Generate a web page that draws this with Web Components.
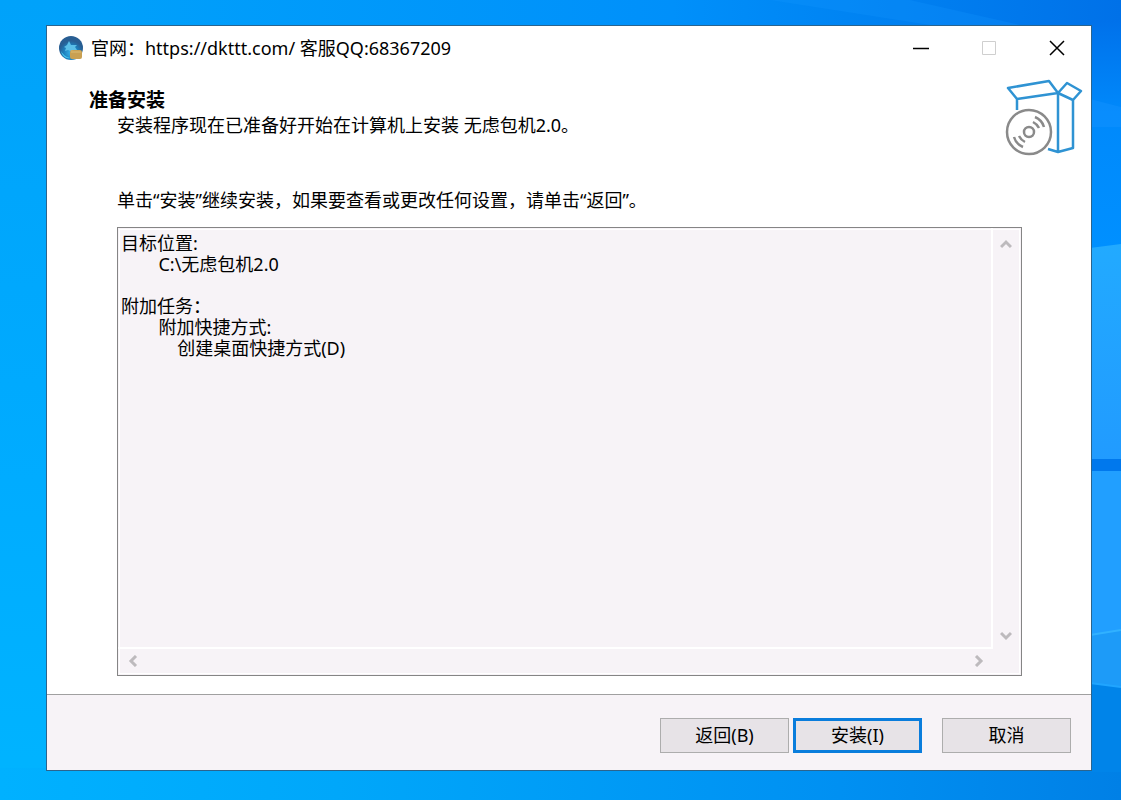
<!DOCTYPE html>
<html lang="zh-CN">
<head>
<meta charset="utf-8">
<meta name="viewport" content="width=device-width, initial-scale=1">
<title>安装向导</title>
<style>
  html, body { margin: 0; height: 100%; }
  body { font: 18px/21px "Noto Sans", "Noto Sans CJK SC", sans-serif; color: #000; }
</style>
</head>
<body>
<setup-desktop>
  <setup-window>
    <title-bar slot="title">官网：https://dkttt.com/ 客服QQ:68367209</title-bar>
    <wizard-header slot="header">
      <span slot="heading">准备安装</span>
      <span slot="detail">安装程序现在已准备好开始在计算机上安装 无虑包机2.0。</span>
    </wizard-header>
    <ready-memo>单击“安装”继续安装，如果要查看或更改任何设置，请单击“返回”。</ready-memo>
    <wizard-footer slot="footer">
      <wizard-button>返回(B)</wizard-button>
      <wizard-button primary>安装(I)</wizard-button>
      <wizard-button apart>取消</wizard-button>
    </wizard-footer>
  </setup-window>
</setup-desktop>

<script>
function define(name, markup) {
  const template = document.createElement('template');
  template.innerHTML = markup;
  customElements.define(name, class extends HTMLElement {
    constructor() {
      super();
      this.attachShadow({ mode: 'open' }).append(template.content.cloneNode(true));
    }
  });
}

define('setup-desktop', `
  <style>
    :host { display: flex; box-sizing: border-box; min-height: 100vh; padding: 25px 29px 29px 46px; position: relative; background: #008ff5; }
    .wallpaper { position: absolute; inset: 0; width: 100%; height: 100%; }
    ::slotted(*) { position: relative; flex: 1; }
  </style>
  <svg class="wallpaper" viewBox="0 0 1121 800" preserveAspectRatio="none" aria-hidden="true">
    <defs>
      <linearGradient id="top"><stop offset="0" stop-color="#00a3fb"/><stop offset=".6" stop-color="#0090fa"/><stop offset="1" stop-color="#0071e8"/></linearGradient>
      <linearGradient id="left" x2="0" y2="1"><stop offset="0" stop-color="#00a2fa"/><stop offset=".6" stop-color="#00acff"/><stop offset="1" stop-color="#00b4ff"/></linearGradient>
      <linearGradient id="bottom"><stop offset="0" stop-color="#00b1ff"/><stop offset=".3" stop-color="#00a7fa"/><stop offset=".75" stop-color="#0090f2"/><stop offset="1" stop-color="#0080e6"/></linearGradient>
      <linearGradient id="right" x2="0" y2="1"><stop offset="0" stop-color="#0071ea"/><stop offset=".4" stop-color="#0089fb"/><stop offset="1" stop-color="#0090ff"/></linearGradient>
      <linearGradient id="pane" x2="0" y2="1"><stop offset="0" stop-color="#22aaff"/><stop offset="1" stop-color="#219bff"/></linearGradient>
    </defs>
    <rect width="1121" height="30" fill="url(#top)"/>
    <path d="M770 0h140l110 25h-90z" fill="#1597ff" opacity=".25"/>
    <rect width="50" height="800" fill="url(#left)"/>
    <rect y="768" width="1121" height="32" fill="url(#bottom)"/>
    <rect x="1090" y="20" width="31" height="230" fill="url(#right)"/>
    <path d="M1090 99l31 8v20h-31z" fill="#1593ff" opacity=".45"/>
    <path d="M1090 248l31-4v216h-31z" fill="url(#pane)"/>
    <rect x="1090" y="459" width="31" height="12" fill="#0078ed"/>
    <path d="M1090 471h31v159l-31 5z" fill="#219fff"/>
    <path d="M1090 635l31-5v57l-31-4z" fill="#1d9bf8"/>
    <path d="M1090 683l31 4v85h-31z" fill="#0084e9"/>
    <path d="M1090 635l31-5" stroke="#31b1ff" stroke-width="2"/>
    <path d="M1090 683l31 4" stroke="#20a5ff" stroke-width="2"/>
  </svg>
  <slot></slot>`);

define('setup-window', `
  <style>
    :host { display: flex; flex-direction: column; border: 1px solid #2b648e; background: #fff; min-width: 0; }
    main { flex: 1; display: flex; padding: 0 69px 18px 70px; }
    ::slotted(ready-memo) { flex: 1; min-width: 0; }
  </style>
  <slot name="title"></slot>
  <slot name="header"></slot>
  <main><slot></slot></main>
  <slot name="footer"></slot>`);

define('title-bar', `
  <style>
    :host { display: flex; align-items: center; height: 44px; padding-left: 12px; }
    .app { width: 24px; height: 24px; margin-right: 8px; flex: none; }
    .caption { flex: 1; white-space: nowrap; }
    button { width: 68px; height: 44px; padding: 0; border: 0; background: none; color: #000; display: grid; place-items: center; }
    button:disabled { color: #cfcfcf; }
    button svg { width: 16px; height: 16px; fill: none; stroke: currentColor; }
  </style>
  <svg class="app" viewBox="0 0 24 24" aria-hidden="true">
    <defs><radialGradient id="globe" cy=".7"><stop offset="0" stop-color="#38b5ea"/><stop offset=".6" stop-color="#1c7fbd"/><stop offset="1" stop-color="#285e93"/></radialGradient></defs>
    <circle cx="12" cy="12" r="12" fill="url(#globe)"/>
    <path d="M5 11l3-2 2-4 2 4 6 0-2 2 2 3-5 2-4-2-3 1 1-3z" fill="#5bbfe8"/>
    <path d="M2 15c3 5 6 6 9 7-4 1-8-2-9-7z" fill="#45c5ed"/>
    <rect x="11" y="14" width="12" height="9" rx="2" fill="#c9a052"/>
    <path d="M12 17v-3l3 1h7v2z" fill="#d3ae62"/>
  </svg>
  <span class="caption"><slot></slot></span>
  <button type="button" aria-label="最小化"><svg viewBox="0 0 16 16"><path d="M0 8.500h16" stroke-width="1.500"/></svg></button>
  <button type="button" aria-label="最大化" disabled><svg viewBox="0 0 16 16"><path d="M1.500 1.500h13v13h-13z"/></svg></button>
  <button type="button" aria-label="关闭"><svg viewBox="0 0 16 16"><path d="M1 1l14 14M15 1L1 15" stroke-width="1.500"/></svg></button>`);

define('wizard-header', `
  <style>
    :host { display: flex; box-sizing: border-box; justify-content: space-between; padding: 9px 8px 0 42px; height: 100px; }
    h1 { margin: 10px 0 4px; font-size: 19px; line-height: 22px; font-weight: 700; }
    p { margin: 0 0 0 28px; }
    svg { width: 78px; height: 78px; fill: none; stroke-width: 2.500; flex: none; }
  </style>
  <div>
    <h1><slot name="heading"></slot></h1>
    <p><slot name="detail"></slot></p>
  </div>
  <svg viewBox="0 0 78 78" aria-hidden="true">
    <g stroke="#2f93d3" stroke-linejoin="round">
      <path d="M3 9L44 2L53 14L12 20ZM53 14L62 4L76 12L68 21ZM12 20V31M53 14V73L68 69V21M53 73L43 70"/>
    </g>
    <g stroke="#8a8a8a">
      <circle cx="24" cy="53" r="22"/>
      <circle cx="24" cy="53" r="5"/>
      <path d="M28 43Q32 45 34 49M30 38Q37 41 39 48M20 63Q16 61 14 57M18 68Q11 65 9 58"/>
    </g>
  </svg>`);

define('ready-memo', `
  <style>
    :host { display: flex; flex-direction: column; }
    label { display: block; margin: 20px 0 16px; }
    .box { flex: 1; display: grid; grid-template: 1fr 26px / 1fr 28px; border: 1px solid #858585; outline: 1px solid #fff; outline-offset: -3px; background: #f7f3f7; }
    textarea { font: inherit; color: inherit; line-height: 21px; margin: 0; padding: 5px 3px; border: 0; outline: 0; resize: none; overflow: hidden; white-space: pre; background: none; min-width: 0; min-height: 0; border-right: 2px solid #fff; border-bottom: 2px solid #fff; }
    .bar { display: flex; justify-content: space-between; }
    .vertical { flex-direction: column; }
    button { border: 0; padding: 0; background: none; width: 28px; height: 24px; display: grid; place-items: center; }
    .vertical button { width: 26px; height: 32px; }
    .vertical button + button { height: 28px; }
    svg { width: 12px; height: 12px; fill: none; stroke: #bdbabd; stroke-width: 3; }
  </style>
  <label for="summary"><slot></slot></label>
  <div class="box">
    <textarea id="summary" readonly wrap="off" spellcheck="false">目标位置:
        C:\\无虑包机2.0

附加任务：
        附加快捷方式:
            创建桌面快捷方式(D)</textarea>
    <div class="bar vertical">
      <button type="button" disabled aria-label="向上滚动"><svg viewBox="0 0 12 12"><path d="M1 9l5-5 5 5"/></svg></button>
      <button type="button" disabled aria-label="向下滚动"><svg viewBox="0 0 12 12"><path d="M1 4l5 5 5-5"/></svg></button>
    </div>
    <div class="bar">
      <button type="button" disabled aria-label="向左滚动"><svg viewBox="0 0 12 12"><path d="M10 1L5 6l5 5"/></svg></button>
      <button type="button" disabled aria-label="向右滚动"><svg viewBox="0 0 12 12"><path d="M3 1l5 5-5 5"/></svg></button>
    </div>
  </div>`);

define('wizard-footer', `
  <style>
    :host { display: flex; justify-content: flex-end; gap: 4px; padding: 23px 20px 17px; border-top: 1px solid #a0a0a0; background: #f7f3f7; }
  </style>
  <slot></slot>`);

define('wizard-button', `
  <style>
    :host { display: block; }
    :host([apart]) { margin-left: 16px; }
    button { box-sizing: border-box; width: 129px; height: 35px; padding: 0; border: 1px solid #adadad; background: #e7e3e7; font: inherit; color: #000; }
    :host([primary]) button { border: 3px solid #0a7ddc; }
  </style>
  <button type="button"><slot></slot></button>`);
</script>
</body>
</html>
